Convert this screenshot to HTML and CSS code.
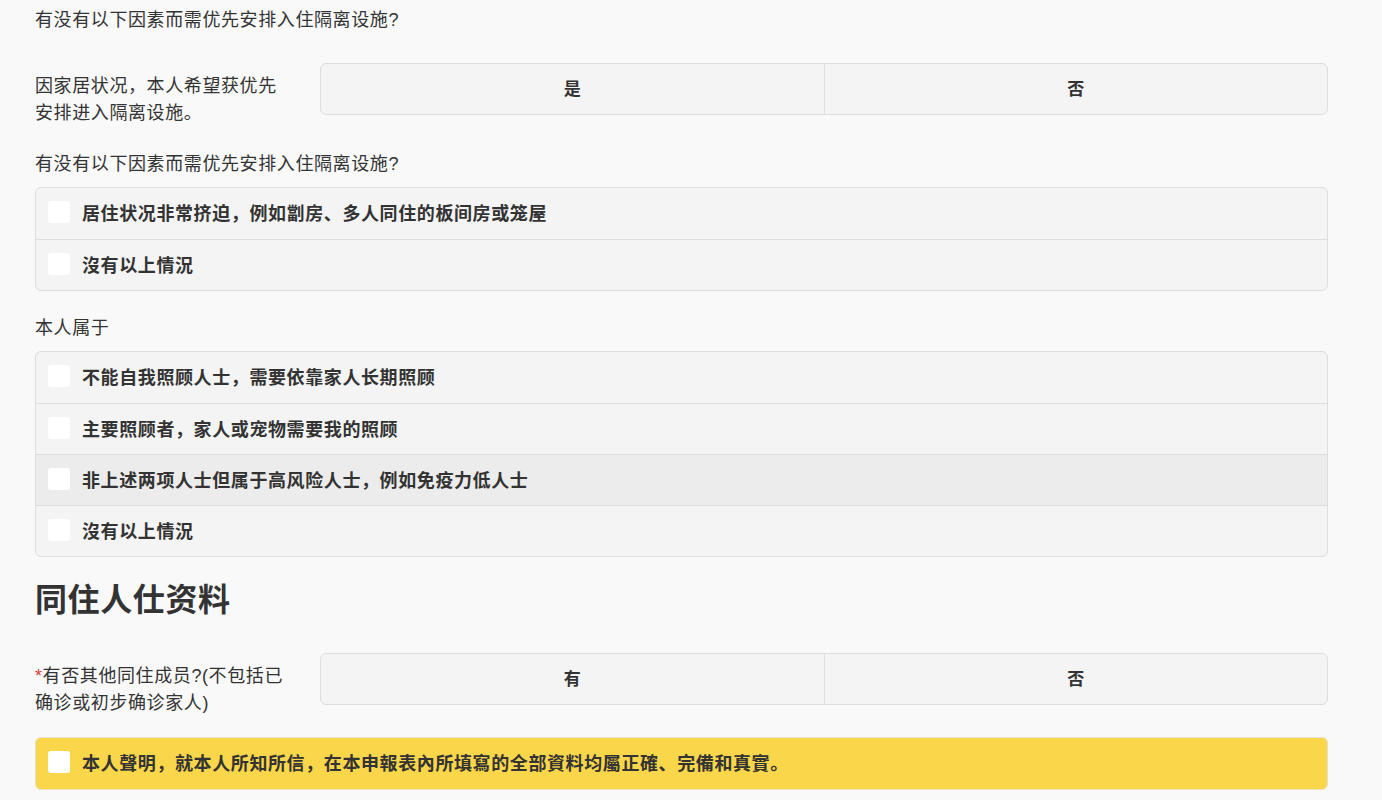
FILE: index.html
```html
<!DOCTYPE html>
<html lang="zh-CN">
<head>
    <meta charset="UTF-8">
    <meta name="viewport" content="width=device-width, initial-scale=1.0">
    <title>隔离设施申报</title>
    <link rel="stylesheet" href="styles.css">
</head>
<body>
    <div class="form">
        <p class="question first">有没有以下因素而需优先安排入住隔离设施?</p>

        <div class="field-row">
            <div class="field-label">因家居状况，本人希望获优先安排进入隔离设施。</div>
            <div class="toggle">
                <button class="toggle-btn">是</button>
                <button class="toggle-btn">否</button>
            </div>
        </div>

        <p class="question">有没有以下因素而需优先安排入住隔离设施?</p>
        <div class="check-group">
            <label class="check-row"><span class="box"></span>居住状况非常挤迫，例如劏房、多人同住的板间房或笼屋</label>
            <label class="check-row"><span class="box"></span>沒有以上情況</label>
        </div>

        <p class="question">本人属于</p>
        <div class="check-group">
            <label class="check-row"><span class="box"></span>不能自我照顾人士，需要依靠家人长期照顾</label>
            <label class="check-row"><span class="box"></span>主要照顾者，家人或宠物需要我的照顾</label>
            <label class="check-row hover"><span class="box"></span>非上述两项人士但属于高风险人士，例如免疫力低人士</label>
            <label class="check-row"><span class="box"></span>沒有以上情況</label>
        </div>

        <h2 class="section-title">同住人仕资料</h2>

        <div class="field-row">
            <div class="field-label"><span class="required">*</span>有否其他同住成员?(不包括已确诊或初步确诊家人)</div>
            <div class="toggle">
                <button class="toggle-btn">有</button>
                <button class="toggle-btn">否</button>
            </div>
        </div>

        <div class="check-group declare">
            <label class="check-row"><span class="box"></span>本人聲明，就本人所知所信，在本申報表內所填寫的全部資料均屬正確、完備和真實。</label>
        </div>
    </div>
</body>
</html>
```

FILE: styles.css
```css
* {
    margin: 0;
    padding: 0;
    box-sizing: border-box;
}

body {
    font-family: "Liberation Sans", "Noto Sans CJK SC", sans-serif;
    background: #f9f9f9;
    color: #333;
    overflow: hidden;
}

.form {
    width: 1293px;
    margin-left: 35px;
}

.question {
    font-size: 18px;
    line-height: 26px;
    letter-spacing: 0.6px;
    margin-top: 24px;
}

.question.first {
    margin-top: 7px;
}

.field-row {
    display: flex;
    align-items: flex-start;
    gap: 30px;
    margin-top: 30px;
}

.field-label {
    width: 255px;
    flex-shrink: 0;
    font-size: 18px;
    line-height: 27px;
    letter-spacing: 0.6px;
    padding-top: 10px;
}

.required {
    color: #e53935;
}

.toggle {
    flex: 1;
    display: flex;
    height: 52px;
    background: #f4f4f4;
    border: 1px solid #ddd;
    border-radius: 6px;
    overflow: hidden;
}

.toggle-btn {
    flex: 1;
    border: none;
    background: transparent;
    font-family: inherit;
    font-size: 17px;
    font-weight: bold;
    color: #333;
    padding-bottom: 4px;
}

.toggle-btn + .toggle-btn {
    border-left: 1px solid #ddd;
}

.check-group {
    margin-top: 10px;
    background: #f4f4f4;
    border: 1px solid #ddd;
    border-radius: 6px;
    overflow: hidden;
}

.check-row {
    display: flex;
    align-items: center;
    gap: 12px;
    height: 51px;
    padding: 0 12px 3px;
    font-size: 18px;
    font-weight: bold;
    letter-spacing: 0.6px;
    color: #333;
}

.check-row + .check-row {
    border-top: 1px solid #ddd;
}

.check-row.hover {
    background: #ececec;
}

.box {
    width: 22px;
    height: 22px;
    background: #fff;
    border-radius: 3px;
    flex-shrink: 0;
}

.section-title {
    font-size: 32px;
    line-height: 40px;
    font-weight: bold;
    letter-spacing: 0.6px;
    margin-top: 23px;
}

.section-title + .field-row {
    margin-top: 33px;
}

.declare {
    margin-top: 20px;
    background: #fad64a;
    border-color: #e6e0c8;
}
```
